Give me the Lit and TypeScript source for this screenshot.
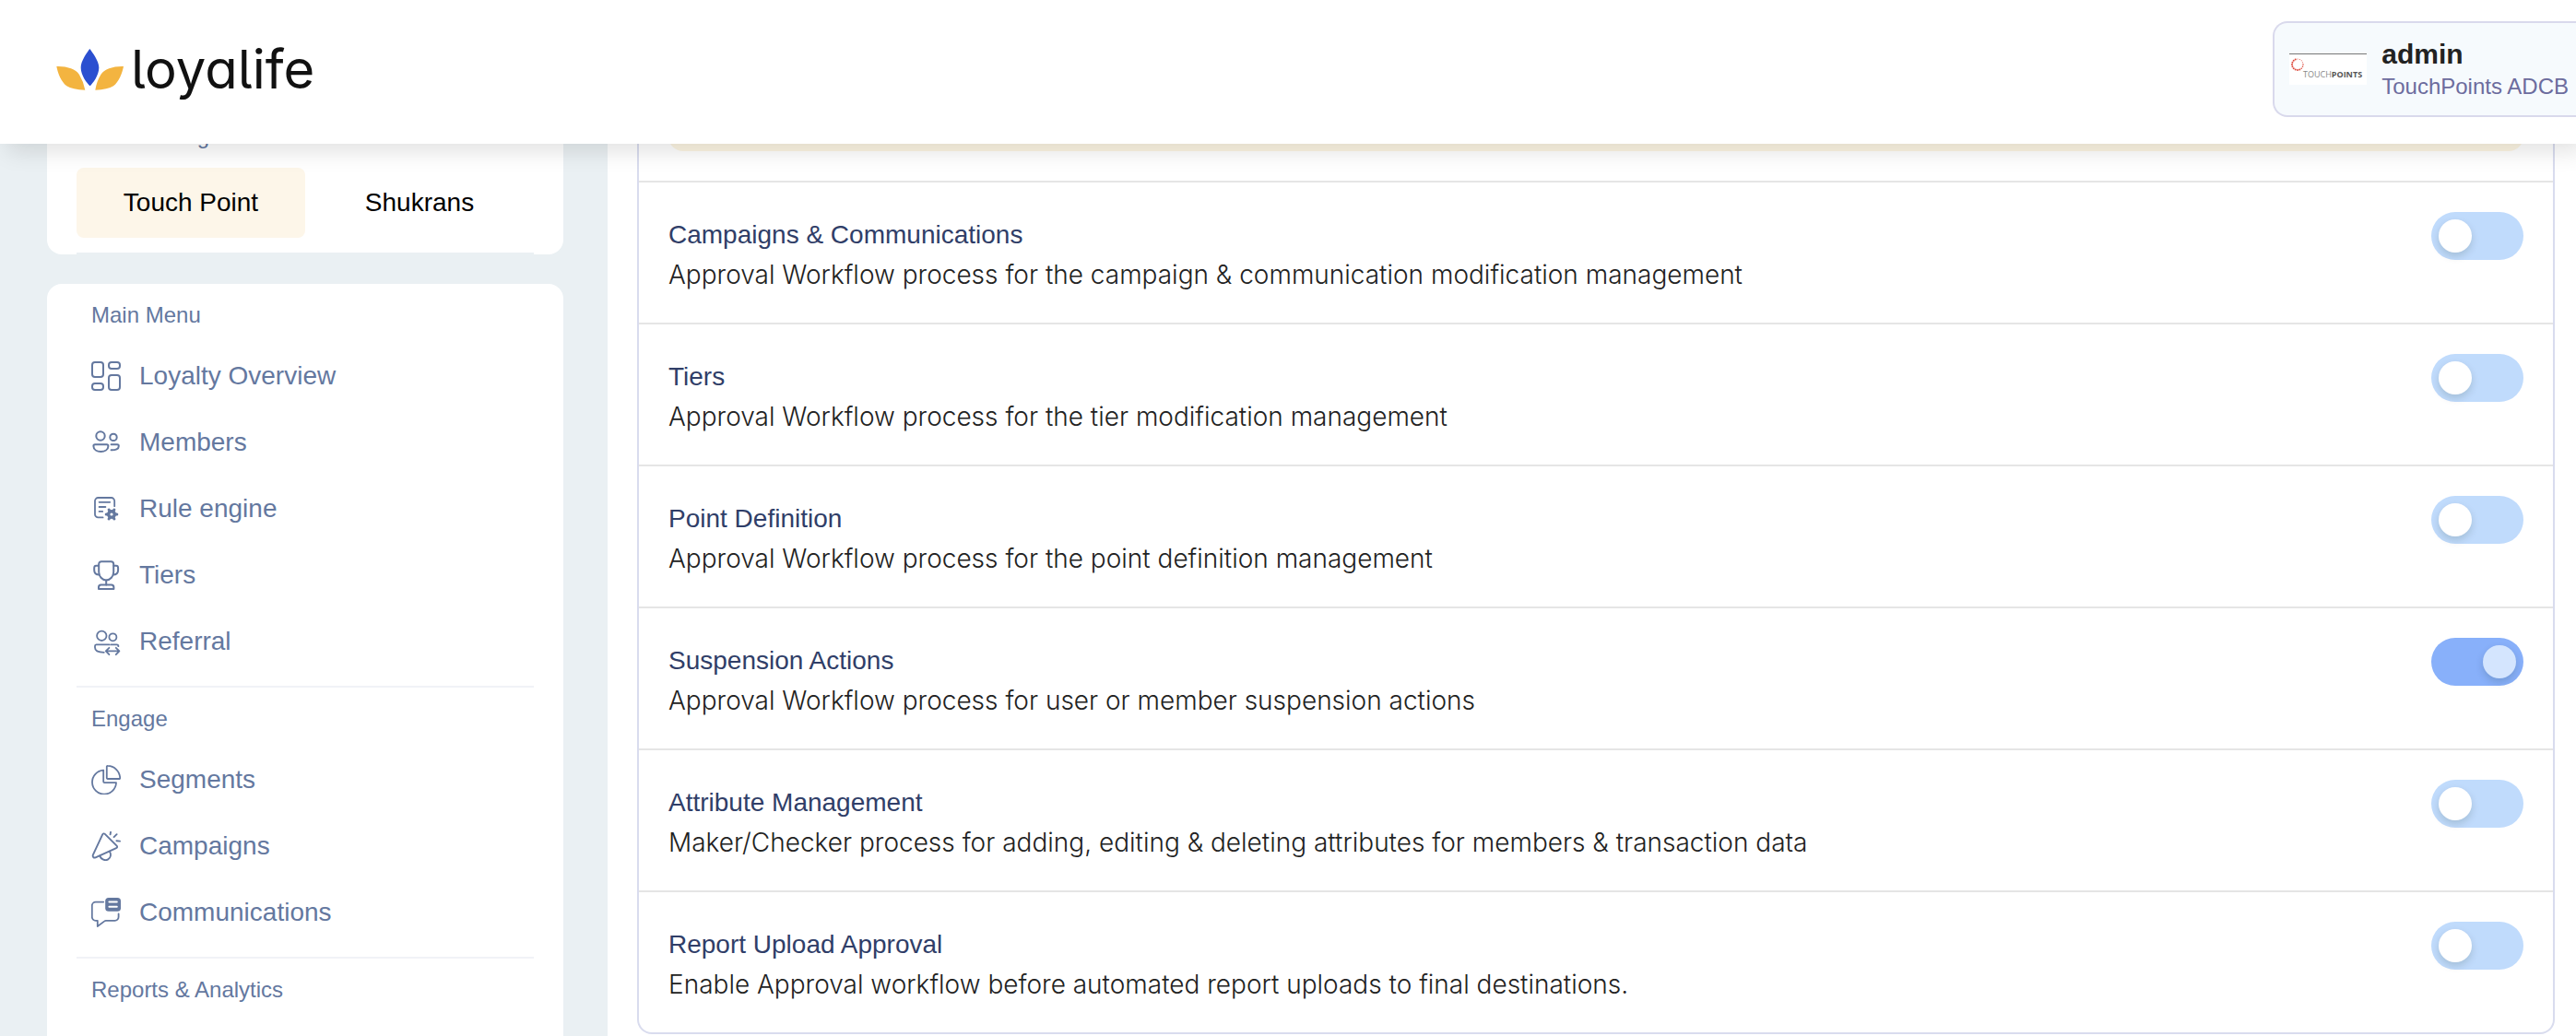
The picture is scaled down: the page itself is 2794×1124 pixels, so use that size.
import { LitElement, html, svg, css, nothing } from "lit";
import { customElement, property, state } from "lit/decorators.js";
import { classMap } from "lit/directives/class-map.js";

const gearTeeth = [0, 60, 120, 180, 240, 300];
const ringDots = Array.from({ length: 16 }, (_, i) => {
  const a = (i / 16) * Math.PI * 2;
  return {
    x: 9 + Math.sin(a) * 6,
    y: 12 - Math.cos(a) * 6,
    r: i < 4 ? 0.5 : i < 7 ? 0.8 : 1,
  };
});

const icons: Record<string, unknown> = {
  overview: svg`<g stroke-width="2">
    <rect x="1" y="1" width="12" height="16" rx="3"/>
    <rect x="19" y="1" width="12" height="7" rx="3"/>
    <rect x="1" y="24" width="12" height="7" rx="3"/>
    <rect x="19" y="15" width="12" height="16" rx="3"/></g>`,
  members: svg`<g stroke-width="2">
    <circle cx="10" cy="9" r="4.7"/><circle cx="24" cy="10.4" r="3.7"/>
    <path d="M4 18.3h12.8a1.6 1.6 0 0 1 1.6 1.6c0 4.2-4 6.1-8 6.1s-8-1.9-8-6.1A1.6 1.6 0 0 1 4 18.3z"/>
    <path d="M21.6 18.3h6.6a1.6 1.6 0 0 1 1.6 1.6c0 3.2-3.4 4.6-8.2 4.4"/></g>`,
  rule: svg`<g stroke-width="1.8">
    <path d="M12.6 25.4H7.5A3.4 3.4 0 0 1 4 22V7.5A3.5 3.5 0 0 1 7.5 4h14.2a3.5 3.5 0 0 1 3.5 3.5v5.7"/>
    <path d="M8.6 8.8h11.6M8.6 14h6.8M8.6 18.9h3.6"/></g>
    <circle cx="22" cy="22" r="3.3" stroke-width="3.4"/>
    <g stroke-width="3">${gearTeeth.map(
      (a) => svg`<path d="M22 17.6v-1.4" transform="rotate(${a + 30} 22 22)"/>`,
    )}</g>`,
  tiers: svg`<g stroke-width="2">
    <path d="M11 1.2h10.4a2.8 2.8 0 0 1 2.8 2.8v8.4a8 9 0 0 1-16 0V4A2.8 2.8 0 0 1 11 1.2z"/>
    <path d="M8 5.8H5.4c-1.4 0-2.2 1-2.2 2.4v2.2c0 3 2 5 5.4 5M24.3 5.8h2.6c1.4 0 2.2 1 2.2 2.4v2.2c0 3-2 5-5.4 5M16.2 21.5v5"/>
    <path d="M10.6 26.6h11.2c1.6 0 2.6 1 2.6 2.6V31H8v-1.8c0-1.6 1-2.6 2.6-2.6z"/></g>`,
  referral: svg`<g stroke-width="1.8">
    <circle cx="11.3" cy="9.8" r="5.2"/><circle cx="23.4" cy="11.3" r="4"/>
    <path d="M19.6 19.4H5.4A1.5 1.5 0 0 0 4 20.9v1.6c0 3.4 3.6 5.3 9.8 5.3"/>
    <path d="M21.2 19.4h6.4a1.8 1.8 0 0 1 1.8 1.8"/>
    <path d="M16.2 26.4h13.8M19.4 22.8l-3.6 3.6 3.6 3.8M26.8 22.8l3.6 3.6-3.6 3.8"/></g>`,
  segments: svg`<g stroke-width="1.8">
    <path d="M13.2 5.6A13 13 0 1 0 27 19.2h-12.6a1.2 1.2 0 0 1-1.2-1.2z"/>
    <path d="M16.8 1.8a.9.9 0 0 1 1-.9A13.6 13.6 0 0 1 31.2 14a.9.9 0 0 1-1 1H17.7a.9.9 0 0 1-.9-.9z"/></g>`,
  campaigns: svg`<g stroke-width="1.9">
    <path d="M14.8 2.9L27.6 15.6c.9.9.7 2-.5 2.5L4.6 28.3c-1.9.8-3.5-.8-2.8-2.7L12.2 3.4c.5-1.1 1.7-1.3 2.6-.5z"/>
    <path d="M9.2 26.6c1.4 4 6 5.6 9 3.8s3.4-5.4 1.8-8.6"/>
    <path d="M20.6 3.4l.4-2.6M24.6 6.2l3-3M27.4 10.2l3.6.4"/></g>`,
  communications: svg`<g stroke-width="1.8">
    <path d="M13.2 4.6H4.8a4 4 0 0 0-4 4v12.2a4 4 0 0 0 4 4h2v6.2l7.6-5.6c.4-.4 1-.6 1.6-.6h9.6a4 4 0 0 0 4-4v-3.4"/></g>
    <rect class="solid" x="15.2" y="0" width="16.8" height="14.8" rx="3.6"/>
    <path class="slot" d="M19.4 4.6h8.4M19.4 9.8h8.4"/>`,
};

interface Item { label: string; icon: string }
interface Section { title: string; items: Item[] }
interface Workflow { id: string; title: string; text: string; on: boolean }

const sections: Section[] = [
  { title: "Main Menu", items: [
    { label: "Loyalty Overview", icon: "overview" },
    { label: "Members", icon: "members" },
    { label: "Rule engine", icon: "rule" },
    { label: "Tiers", icon: "tiers" },
    { label: "Referral", icon: "referral" } ] },
  { title: "Engage", items: [
    { label: "Segments", icon: "segments" },
    { label: "Campaigns", icon: "campaigns" },
    { label: "Communications", icon: "communications" } ] },
  { title: "Reports & Analytics", items: [] },
];

@customElement("app-header")
class AppHeader extends LitElement {
  static styles = css`
    :host { display: block; }
    .bar {
      display: flex; justify-content: space-between; align-items: flex-start;
      box-sizing: border-box; height: 156px; padding: 23px 0 0 60px;
      background: #fff; box-shadow: 8px 8px 24px rgba(0, 0, 0, 0.12);
    }
    .brand { display: flex; align-items: center; gap: 7px; height: 104px; color: #111; text-decoration: none; }
    .leaf { display: block; width: 75px; height: 47px; }
    .word { font: 400 58px/72px Inter, "Liberation Sans", sans-serif; font-feature-settings: "cv11", "cv05"; }
    .user {
      display: flex; align-items: center; gap: 16px; box-sizing: border-box; height: 104px;
      padding: 0 8px 0 16px; border: 2px solid #d9d9ec; border-right: 0;
      border-radius: 16px 0 0 16px; background: #f6fafd; color: #222;
      font-family: "Liberation Sans", Arial, sans-serif; text-align: left;
    }
    .tenant { display: block; width: 84px; height: 34px; background: #fff; }
    .tenant text { font-family: "Open Sans", sans-serif; font-size: 9px; }
    .name { display: block; font-size: 30px; line-height: 38px; font-weight: 700; }
    .org { display: block; font-size: 24px; line-height: 32px; color: #6c6c9e; white-space: nowrap; }
  `;
  render() {
    return html`<header class="bar">
      <a class="brand" href="#home">
        <svg class="leaf" viewBox="30 30 225 141" aria-hidden="true">
          <path fill="#2b4fd0" d="M142 33C150 44 172 72 172 94C172 120 152 145 143 154C133 145 113 120 113 94C113 72 134 44 142 33z"/>
          <path fill="#f3b440" d="M34 90Q60 89 81 97Q99 103 108 117Q122 140 127 167Q85 166 67 154C49 140 38 112 34 90z"/>
          <path fill="#f3b440" d="M252 90Q226 89 205 97Q187 103 178 117Q164 140 160 167Q201 166 219 154C237 140 248 112 252 90z"/>
        </svg>
        <span class="word">loyalife</span>
      </a>
      <button class="user" type="button">
        <svg class="tenant" viewBox="0 0 84 34" aria-hidden="true">
          <rect width="84" height="1" fill="#777"/>
          ${ringDots.map((d) => svg`<circle cx=${d.x} cy=${d.y} r=${d.r} fill="#dd4a3d"/>`)}
          <text x="15" y="26" fill="#888">TOUCH<tspan fill="#555" font-weight="700">POINTS</tspan></text>
        </svg>
        <span><span class="name">admin</span><span class="org">TouchPoints ADCB</span></span>
      </button>
    </header>`;
  }
}

@customElement("side-menu")
class SideMenu extends LitElement {
  @state() program = "Touch Point";
  static styles = css`
    :host { display: flex; flex-direction: column; gap: 32px; color: #64789f; font-family: "Liberation Sans", Arial, sans-serif; }
    .card { padding: 0 32px; border-radius: 16px; background: #fff; }
    .menu { flex: 1; border-radius: 16px 16px 0 0; }
    .heading { margin: 0; padding: 20px 16px 16px; font-size: 24px; line-height: 28px; font-weight: 400; }
    .programs { display: flex; padding: 4px 0 16px; border-bottom: 2px solid #eaf0f3; }
    .program {
      flex: 1; height: 76px; padding: 0; border: 0; border-radius: 8px; background: none;
      color: #000; font: 400 28px/32px "Liberation Sans", Arial, sans-serif;
    }
    .chosen { background: #fdf6e9; }
    .section + .section { border-top: 2px solid #f1f2f7; }
    .list { margin: 0; padding: 0 0 12px; list-style: none; }
    .link {
      display: flex; align-items: center; gap: 20px; height: 72px; padding: 0 16px;
      color: inherit; font-size: 28px; line-height: 32px; text-decoration: none;
    }
    .icon { width: 32px; height: 32px; fill: none; stroke: currentColor; stroke-linecap: round; stroke-linejoin: round; }
    .solid { fill: currentColor; stroke: none; }
    .slot { stroke: #fff; stroke-width: 2; }
  `;
  render() {
    return html`
      <section class="card">
        <h2 class="heading">Linked Programs</h2>
        <div class="programs">
          ${["Touch Point", "Shukrans"].map((p) => html`<button type="button"
            class=${classMap({ program: true, chosen: p === this.program })}
            @click=${() => (this.program = p)}>${p}</button>`)}
        </div>
      </section>
      <nav class="card menu">
        ${sections.map((s) => html`<section class="section">
          <h2 class="heading">${s.title}</h2>
          ${s.items.length ? html`<ul class="list">
            ${s.items.map((i) => html`<li><a class="link" href="#${i.icon}">
              <svg class="icon" viewBox="0 0 32 32" aria-hidden="true">${icons[i.icon]}</svg>${i.label}</a></li>`)}
          </ul>` : nothing}
        </section>`)}
      </nav>`;
  }
}

@customElement("workflow-row")
class WorkflowRow extends LitElement {
  @property({ attribute: false }) item!: Workflow;
  static styles = css`
    :host { display: block; }
    .row { display: flex; justify-content: space-between; align-items: flex-start; gap: 32px; padding: 32px; }
    .label { padding-top: 2px; }
    .title { display: block; color: #303e68; font: 400 28px/46px "Liberation Sans", Arial, sans-serif; }
    .text { display: block; color: #222; font: 300 28px/40px Inter, "Liberation Sans", sans-serif; }
    .toggle {
      appearance: none; flex: none; display: flex; box-sizing: border-box; width: 100px; height: 52px;
      margin: 0; padding: 8px; border-radius: 26px; background: #c0dbfc;
    }
    .toggle::before {
      content: ""; width: 36px; height: 36px; border-radius: 50%; background: #fff;
      box-shadow: 0 4px 8px rgba(0, 35, 11, 0.15);
    }
    .toggle:checked { justify-content: flex-end; background: #88b0fa; }
    .toggle:checked::before { background: #d4e5fe; }
  `;
  render() {
    const { id, title, text, on } = this.item;
    return html`<div class="row">
      <label class="label" for=${id}><span class="title">${title}</span><span class="text">${text}</span></label>
      <input class="toggle" type="checkbox" role="switch" id=${id} .checked=${on} />
    </div>`;
  }
}

@customElement("app-root")
class AppRoot extends LitElement {
  private workflows: Workflow[] = [
    { id: "campaigns", title: "Campaigns & Communications", text: "Approval Workflow process for the campaign & communication modification management", on: false },
    { id: "tiers", title: "Tiers", text: "Approval Workflow process for the tier modification management", on: false },
    { id: "points", title: "Point Definition", text: "Approval Workflow process for the point definition management", on: false },
    { id: "suspension", title: "Suspension Actions", text: "Approval Workflow process for user or member suspension actions", on: true },
    { id: "attributes", title: "Attribute Management", text: "Maker/Checker process for adding, editing & deleting attributes for members & transaction data", on: false },
    { id: "reports", title: "Report Upload Approval", text: "Enable Approval workflow before automated report uploads to final destinations.", on: false },
  ];
  static styles = css`
    :host { display: flex; flex-direction: column; height: 100vh; overflow: hidden; background: #eaf0f3; }
    .top { position: relative; z-index: 1; flex: none; }
    .body { display: flex; flex: 1; min-height: 0; margin-top: -42px; }
    .side { flex: none; width: 560px; margin: 0 48px 0 51px; }
    .main { flex: 1; min-width: 0; padding: 0 23px 0 32px; background: #fff; }
    .panel { border: 2px solid #d9dcee; border-top: 0; border-radius: 0 0 16px 16px; }
    .notice { height: 50px; margin: 0 32px 32px; border-radius: 0 0 16px 16px; background: #fdf6e3; }
    .entry { border-top: 2px solid #e5e5e5; }
  `;
  render() {
    return html`
      <app-header class="top"></app-header>
      <div class="body">
        <side-menu class="side"></side-menu>
        <main class="main">
          <div class="panel">
            <div class="notice"></div>
            ${this.workflows.map((w) => html`<workflow-row class="entry" .item=${w}></workflow-row>`)}
          </div>
        </main>
      </div>`;
  }
}
